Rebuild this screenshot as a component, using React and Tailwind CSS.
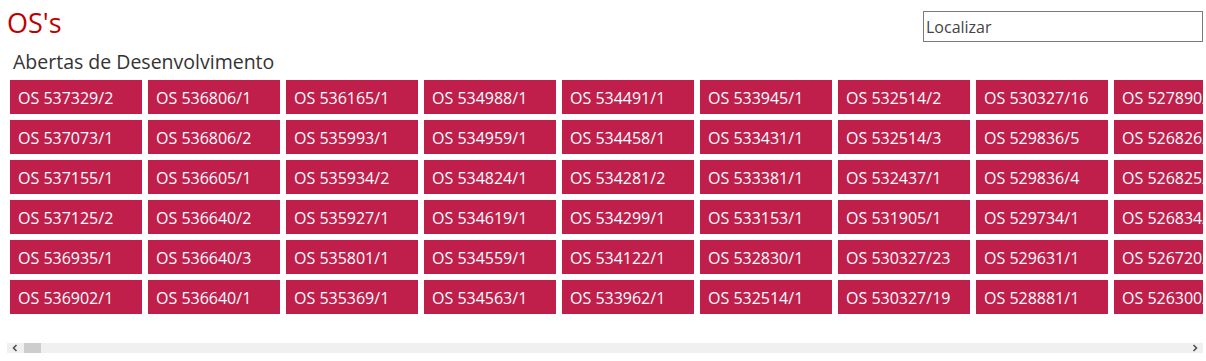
import React from 'react';

const columns = [
  ['537329/2', '537073/1', '537155/1', '537125/2', '536935/1', '536902/1'],
  ['536806/1', '536806/2', '536605/1', '536640/2', '536640/3', '536640/1'],
  ['536165/1', '535993/1', '535934/2', '535927/1', '535801/1', '535369/1'],
  ['534988/1', '534959/1', '534824/1', '534619/1', '534559/1', '534563/1'],
  ['534491/1', '534458/1', '534281/2', '534299/1', '534122/1', '533962/1'],
  ['533945/1', '533431/1', '533381/1', '533153/1', '532830/1', '532514/1'],
  ['532514/2', '532514/3', '532437/1', '531905/1', '530327/23', '530327/19'],
  ['530327/16', '529836/5', '529836/4', '529734/1', '529631/1', '528881/1'],
  ['527890/1', '526826/1', '526825/1', '526834/1', '526720/1', '526300/1'],
];

const Tile = ({ code }) => (
  <div className="w-[132px] h-[34px] shrink-0 bg-[#c01e4b] text-white text-[16px] leading-[34px] pl-[8px] pt-[1px] whitespace-nowrap">
    OS {code}
  </div>
);

export default function App() {
  return (
    <div className="w-[1206px] h-[361px] bg-white overflow-hidden" style={{ fontFamily: '"Open Sans", "Noto Sans", sans-serif' }}>
      <div className="flex justify-between items-start pl-[7px] pr-[3px]">
        <h1 className="text-[27px] leading-none text-[#c00000] mt-[9px]">OS's</h1>
        <input
          type="text"
          placeholder="Localizar"
          className="mt-[11px] w-[280px] h-[31px] border border-[#7a7a7a] px-[2px] text-[16px] text-[#333] placeholder:text-[#444] outline-none"
        />
      </div>
      <h2 className="text-[19.5px] leading-[20px] text-[#333] pl-[13px] mt-[10px]">Abertas de Desenvolvimento</h2>

      <div className="ml-[7px] w-[1196px] mt-[8px]">
        <div className="overflow-hidden pl-[3px]">
          <div className="flex gap-[6px]">
            {columns.map((col, i) => (
              <div key={i} className="flex flex-col gap-[6px]">
                {col.map((c) => <Tile key={c} code={c} />)}
              </div>
            ))}
          </div>
        </div>

        <div className="mt-[29px] h-[10px] bg-[#f0f0f0] flex items-center">
          <svg width="10" height="10" viewBox="0 0 10 10" className="ml-[3px]">
            <path d="M6.5 2 L3.5 5 L6.5 8" fill="none" stroke="#505050" strokeWidth="1.6" />
          </svg>
          <div className="ml-[4px] w-[17px] h-[10px] bg-[#cdcdcd]" />
          <div className="flex-1" />
          <svg width="10" height="10" viewBox="0 0 10 10" className="mr-[3px]">
            <path d="M3.5 2 L6.5 5 L3.5 8" fill="none" stroke="#505050" strokeWidth="1.6" />
          </svg>
        </div>
      </div>
    </div>
  );
}
